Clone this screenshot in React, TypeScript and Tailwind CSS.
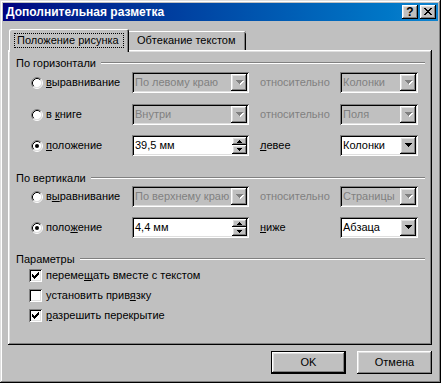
import React from 'react';

// classic 3D bevels
const RAISED =
  'shadow-[inset_-1px_-1px_0_#000,inset_1px_1px_0_#fff,inset_-2px_-2px_0_#808080,inset_2px_2px_0_#dfdfdf]';
const SUNKEN =
  'shadow-[inset_1px_1px_0_#808080,inset_-1px_-1px_0_#fff,inset_2px_2px_0_#000,inset_-2px_-2px_0_#dfdfdf]';

const DOWN = 'M0 0h7v1H0zM1 1h5v1H1zM2 2h3v1H2zM3 3h1v1H3z';

function DownArrow({ disabled }: { disabled?: boolean }) {
  return (
    <svg width="8" height="5" viewBox="0 0 8 5" shapeRendering="crispEdges">
      {disabled && <path d={DOWN} fill="#fff" transform="translate(1 1)" />}
      <path d={DOWN} fill={disabled ? '#808080' : '#000'} />
    </svg>
  );
}

function SpinArrow({ up }: { up?: boolean }) {
  return (
    <svg width="5" height="3" viewBox="0 0 5 3" shapeRendering="crispEdges">
      <path
        d={up ? 'M2 0h1v1H2zM1 1h3v1H1zM0 2h5v1H0z' : 'M0 0h5v1H0zM1 1h3v1H1zM2 2h1v1H2z'}
        fill="#000"
      />
    </svg>
  );
}

function Radio({ checked }: { checked?: boolean }) {
  return (
    <svg width="12" height="12" viewBox="0 0 12 12" className="shrink-0">
      <circle cx="6" cy="6" r="4.5" fill="#fff" />
      <path d="M2.11 9.89A5.5 5.5 0 0 1 9.89 2.11" fill="none" stroke="#808080" />
      <path d="M9.89 2.11A5.5 5.5 0 0 1 2.11 9.89" fill="none" stroke="#fff" />
      <path d="M2.82 9.18A4.5 4.5 0 0 1 9.18 2.82" fill="none" stroke="#000" />
      <path d="M9.18 2.82A4.5 4.5 0 0 1 2.82 9.18" fill="none" stroke="#dfdfdf" />
      {checked && <circle cx="6" cy="6" r="2" fill="#000" />}
    </svg>
  );
}

function Check({ checked }: { checked?: boolean }) {
  return (
    <div className={`w-[13px] h-[13px] shrink-0 bg-white flex items-center justify-center ${SUNKEN}`}>
      {checked && (
        <svg width="7" height="7" viewBox="0 0 7 7" shapeRendering="crispEdges">
          <path
            d="M6 0h1v1H6zM5 1h2v1H5zM0 2h1v1H0zM4 2h3v1H4zM0 3h2v1H0zM3 3h3v1H3zM0 4h5v1H0zM1 5h3v1H1zM2 6h1v1H2z"
            fill="#000"
          />
        </svg>
      )}
    </div>
  );
}

function Combo({ value, w, disabled }: { value: string; w: string; disabled?: boolean }) {
  return (
    <div
      className={`${w} h-[21px] shrink-0 flex p-[2px] ${SUNKEN} ${
        disabled ? 'bg-[#c0c0c0] text-[#808080]' : 'bg-white text-black'
      }`}
    >
      <div className="flex-1 min-w-0 overflow-hidden whitespace-nowrap pl-[1px] leading-[17px]">{value}</div>
      <div className={`w-[16px] h-[17px] shrink-0 bg-[#c0c0c0] flex items-center justify-center pl-[1px] ${RAISED}`}>
        <DownArrow disabled={disabled} />
      </div>
    </div>
  );
}

function Spinner({ value }: { value: string }) {
  return (
    <div className={`w-[117px] h-[21px] shrink-0 flex p-[2px] bg-white ${SUNKEN}`}>
      <div className="flex-1 pl-[1px] leading-[17px] whitespace-nowrap">{value}</div>
      <div className="w-[15px] flex flex-col">
        <div className={`h-[8px] bg-[#c0c0c0] flex items-center justify-center ${RAISED}`}>
          <SpinArrow up />
        </div>
        <div className={`h-[9px] bg-[#c0c0c0] flex items-center justify-center ${RAISED}`}>
          <SpinArrow />
        </div>
      </div>
    </div>
  );
}

function GroupHeader({ title, cls }: { title: string; cls: string }) {
  return (
    <div className={`flex items-center ${cls}`}>
      <span className="whitespace-nowrap">{title}</span>
      <div className="flex-1 ml-[5px] h-[2px] border-t border-[#808080] border-b border-b-white" />
    </div>
  );
}

function Option({ checked, children }: { checked?: boolean; children: React.ReactNode }) {
  return (
    <div className="w-[101px] shrink-0 flex items-center">
      <Radio checked={checked} />
      <span className="ml-[3px] whitespace-nowrap">{children}</span>
    </div>
  );
}

function CheckRow({ checked, children }: { checked?: boolean; children: React.ReactNode }) {
  return (
    <div className="flex items-center h-[20px] pl-[13px]">
      <Check checked={checked} />
      <span className="ml-[4px] whitespace-nowrap">{children}</span>
    </div>
  );
}

export default function App() {
  return (
    <div
      className={`w-[441px] h-[383px] bg-[#c0c0c0] p-[3px] flex flex-col text-[11px] text-black font-['Liberation_Sans',Arial,sans-serif] shadow-[inset_-1px_-1px_0_#000,inset_1px_1px_0_#dfdfdf,inset_-2px_-2px_0_#808080,inset_2px_2px_0_#fff]`}
    >
      {/* title bar */}
      <div className="h-[18px] shrink-0 flex items-center bg-linear-to-r from-[#000080] to-[#1084d0] pl-[3px] pr-[2px]">
        <span className="flex-1 text-white font-bold text-[12px] whitespace-nowrap">Дополнительная разметка</span>
        <div className={`w-[16px] h-[14px] bg-[#c0c0c0] flex items-center justify-center font-bold text-[12px] leading-none pb-[1px] ${RAISED}`}>
          ?
        </div>
        <div className={`w-[16px] h-[14px] ml-[2px] bg-[#c0c0c0] flex items-center justify-center pb-[1px] ${RAISED}`}>
          <svg width="8" height="7" viewBox="0 0 8 7" shapeRendering="crispEdges">
            <path
              d="M0 0h2v1H0zM6 0h2v1H6zM1 1h2v1H1zM5 1h2v1H5zM2 2h4v1H2zM3 3h2v1H3zM2 4h4v1H2zM1 5h2v1H1zM5 5h2v1H5zM0 6h2v1H0zM6 6h2v1H6z"
              fill="#000"
            />
          </svg>
        </div>
      </div>

      <div className="flex flex-col pl-[5px] pr-[6px]">
        {/* tabs */}
        <div className="flex items-end h-[21px] mt-[8px] pl-[1px]">
          <div className="relative z-10 -mb-[2px] h-[23px] w-[120px] bg-[#c0c0c0] rounded-t-[2px] pt-[4px] pl-[5px] shadow-[inset_1px_1px_0_#fff,inset_-1px_0_0_#000,inset_-2px_0_0_#808080]">
            <div className="h-[15px] w-[110px] border border-dotted border-black flex items-center pl-[2px] whitespace-nowrap">
              Положение рисунка
            </div>
          </div>
          <div className="h-[19px] w-[117px] bg-[#c0c0c0] rounded-tr-[2px] flex items-center pl-[8px] whitespace-nowrap shadow-[inset_0_1px_0_#fff,inset_-1px_0_0_#000,inset_-2px_0_0_#808080]">
            Обтекание текстом
          </div>
        </div>

        {/* panel */}
        <div className={`h-[295px] flex flex-col pl-[8px] pr-[7px] ${RAISED}`}>
          <GroupHeader title="По горизонтали" cls="h-[14px] mt-[6px]" />
          <div className="flex items-center h-[21px] mt-[2px] pl-[15px]">
            <Option>
              <u>в</u>ыравнивание
            </Option>
            <Combo w="w-[117px]" value="По левому краю" disabled />
            <span className="w-[91px] shrink-0 pl-[11px] text-[#808080]">относительно</span>
            <Combo w="w-[78px]" value="Колонки" disabled />
          </div>
          <div className="flex items-center h-[21px] mt-[11px] pl-[15px]">
            <Option>
              в <u>к</u>ниге
            </Option>
            <Combo w="w-[117px]" value="Внутри" disabled />
            <span className="w-[91px] shrink-0 pl-[11px] text-[#808080]">относительно</span>
            <Combo w="w-[78px]" value="Поля" disabled />
          </div>
          <div className="flex items-center h-[21px] mt-[10px] pl-[15px]">
            <Option checked>
              <u>п</u>оложение
            </Option>
            <Spinner value="39,5 мм" />
            <span className="w-[91px] shrink-0 pl-[11px]">
              <u>л</u>евее
            </span>
            <Combo w="w-[78px]" value="Колонки" />
          </div>

          <GroupHeader title="По вертикали" cls="h-[14px] mt-[15px]" />
          <div className="flex items-center h-[21px] mt-[1px] pl-[15px]">
            <Option>
              в<u>ы</u>равнивание
            </Option>
            <Combo w="w-[117px]" value="По верхнему краю" disabled />
            <span className="w-[91px] shrink-0 pl-[11px] text-[#808080]">относительно</span>
            <Combo w="w-[78px]" value="Страницы" disabled />
          </div>
          <div className="flex items-center h-[21px] mt-[10px] pl-[15px]">
            <Option checked>
              поло<u>ж</u>ение
            </Option>
            <Spinner value="4,4 мм" />
            <span className="w-[91px] shrink-0 pl-[11px]">
              <u>н</u>иже
            </span>
            <Combo w="w-[78px]" value="Абзаца" />
          </div>

          <GroupHeader title="Параметры" cls="h-[12px] mt-[15px]" />
          <CheckRow checked>
            переме<u>щ</u>ать вместе с текстом
          </CheckRow>
          <CheckRow>
            установить прив<u>я</u>зку
          </CheckRow>
          <CheckRow checked>
            <u>р</u>азрешить перекрытие
          </CheckRow>
        </div>
      </div>

      {/* buttons */}
      <div className="flex justify-end gap-[11px] pr-[6px] mt-[6px]">
        <div className={`w-[75px] h-[23px] border border-black bg-[#c0c0c0] flex items-center justify-center ${RAISED}`}>
          OK
        </div>
        <div className={`w-[75px] h-[23px] bg-[#c0c0c0] flex items-center justify-center ${RAISED}`}>
          Отмена
        </div>
      </div>
    </div>
  );
}
